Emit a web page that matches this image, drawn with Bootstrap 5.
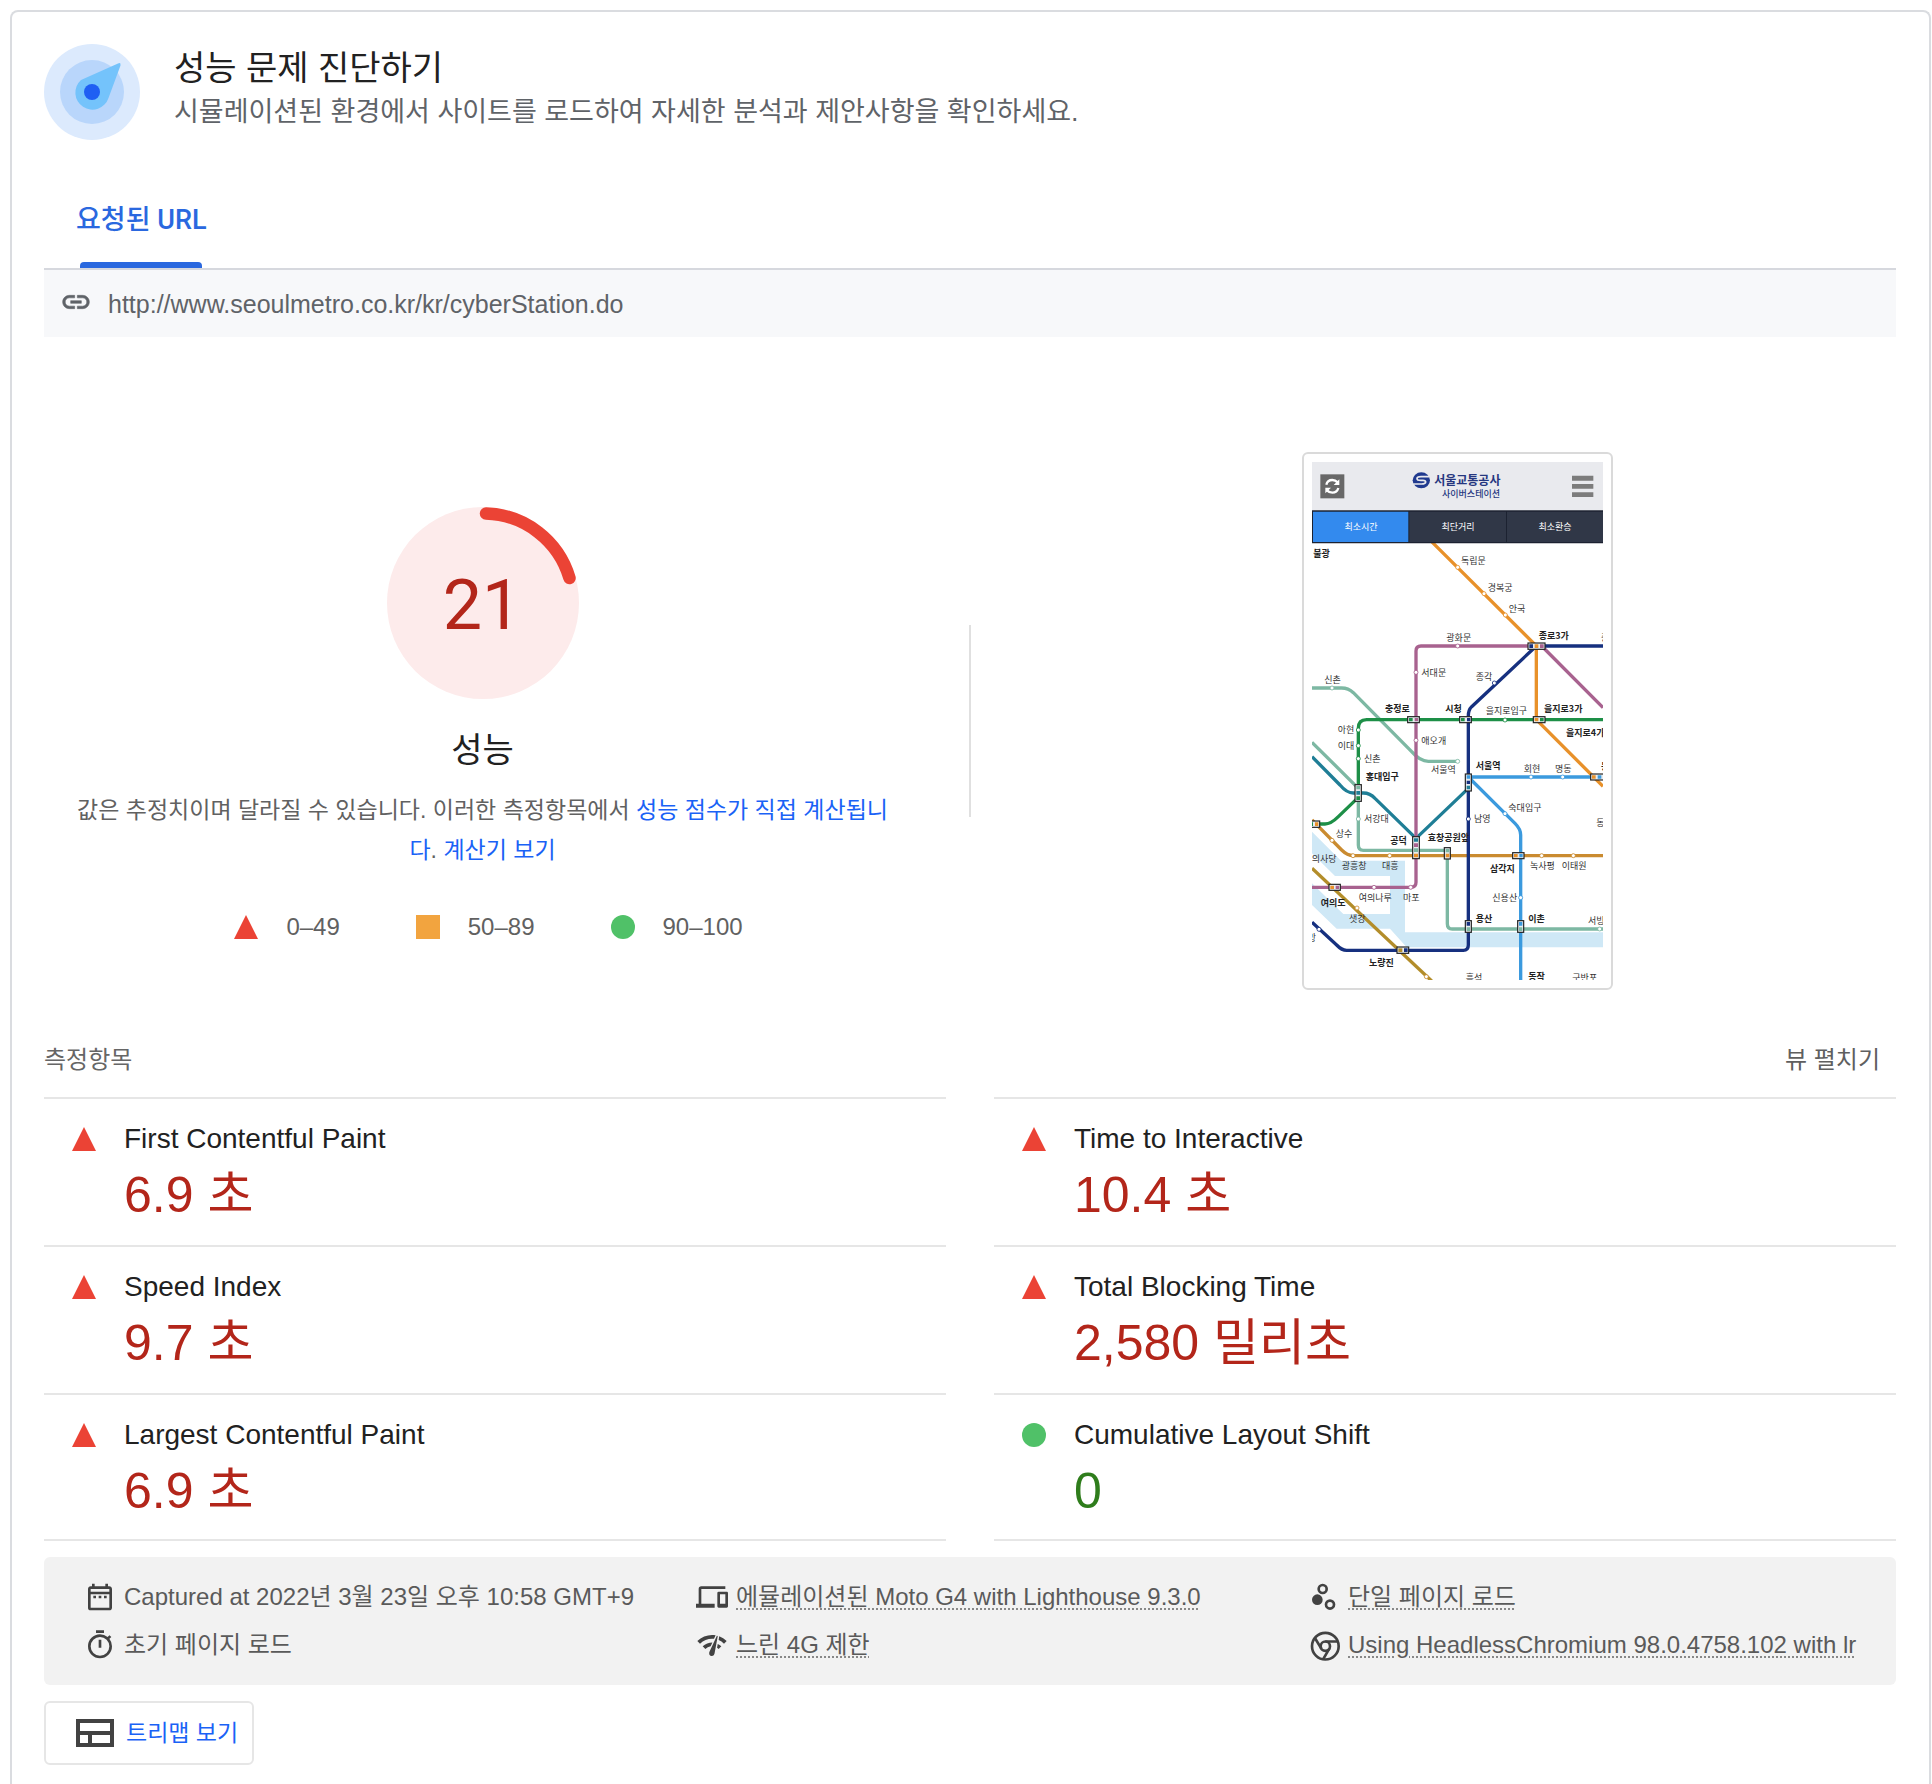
<!DOCTYPE html>
<html lang="ko">
<head>
<meta charset="utf-8">
<meta name="viewport" content="width=device-width, initial-scale=1">
<title>성능 문제 진단하기</title>
<link href="https://cdn.jsdelivr.net/npm/bootstrap@5.3.0/dist/css/bootstrap.min.css" rel="stylesheet">
<style>
  body { font-family: "Liberation Sans", "Noto Sans CJK KR", sans-serif; font-size: 24px; line-height: 40px; color: #212121; background: #fff; }
  .report { margin: 10px 1px 0 10px; padding: 32px 33px 19px 32px; border: 2px solid #dadce0; border-bottom: 0; border-radius: 8px 8px 0 0; }
  .report-head { gap: 34px; }
  .report-title { font-size: 34px; line-height: 48px; font-weight: 400; margin: 0; }
  .report-sub { font-size: 27px; color: #5f6368; margin: 0; }
  .url-tabs { margin-top: 48px; border-bottom: 2px solid #d6d8de; }
  .url-tab { position: relative; height: 80px; padding: 0 32px 16px; border: 0; background: none; color: #2a68df; font-family: Roboto, "Noto Sans CJK KR", sans-serif; font-size: 27px; font-weight: 500; line-height: 60px; }
  .url-tab::after { content: ""; position: absolute; left: 36px; right: 36px; bottom: 0; height: 6px; background: #2a68df; border-radius: 4px 4px 0 0; }
  .url-bar { height: 67px; padding: 0 16px; gap: 16px; background: #f7f8fa; color: #5f6368; font-size: 25px; }
  .url-bar svg { margin-bottom: 4px; }
  .score-row { margin-top: 115px; }
  .score-main { padding-top: 55px; flex: 1 1 0; min-width: 0; }
  .score-shot { flex: 1 1 0; min-width: 0; }
  .score-rule { width: 2px; height: 192px; background: #e0e0e0; margin: 0 48px; }
  .score-name { font-size: 34px; line-height: 48px; margin: 27px 0 16px; font-weight: 400; }
  .score-note { font-size: 23px; color: #616161; max-width: 820px; margin: 0; }
  .blue-link { color: #1a62f6; text-decoration: none; }
  .score-key { margin-top: 37px; padding-left: 12px; gap: 76px; color: #616161; }
  .score-key span { gap: 28px; }
  .shot { padding: 8px; border: 2px solid #dadada; border-radius: 6px; }
  .metric-head { margin-top: 54px; line-height: 32px; padding-bottom: 21px; color: #666; }
  .expand-btn { border: 0; background: none; padding: 0 16px; color: #5f5f5f; line-height: 32px; }
  .metric-grid { display: grid; grid-template-columns: 1fr 1fr; column-gap: 48px; }
  .metric { border-top: 2px solid #e6e6e6; padding: 20px 28px; gap: 28px; }
  .metric svg { margin-top: 8px; }
  .metric:nth-last-child(-n+2) { border-bottom: 2px solid #e6e6e6; padding-bottom: 18px; }
  .metric-name { font-size: 28px; line-height: 40px; font-weight: 400; margin: 0 0 6px; }
  .metric-value { font-size: 50px; line-height: 60px; color: #b3261a; }
  .metric-value.good { color: #2f7d1c; }
  .env { display: grid; grid-template-columns: repeat(3, minmax(0, 1fr)); column-gap: 48px; margin: 16px 0; padding: 16px 32px; background: #f2f2f2; border-radius: 6px; color: #5a5a5a; list-style: none; }
  .env li { display: flex; align-items: center; gap: 8px; height: 48px; padding-left: 8px; white-space: nowrap; overflow: hidden; }
  .env svg { flex: none; fill: #424242; }
  .env a { color: inherit; text-decoration: underline dotted #888 2px; text-underline-offset: 3px; }
  .treemap-btn { height: 64px; padding: 0 14px 0 24px; gap: 8px; border: 2px solid #e6e6e6; border-radius: 6px; background: #fff; color: #1a62f6; font-size: 23px; }
  .gauge-num { font: 70px Roboto, sans-serif; fill: #b3261a; }
  .map-text { font: 27px "Noto Sans CJK KR", sans-serif; fill: #333; }
  .map-strong { font-weight: 700; fill: #222; }
  .map-line { fill: none; stroke-width: 10; }
</style>
<script src="https://cdn.jsdelivr.net/npm/bootstrap@5.3.0/dist/js/bootstrap.bundle.min.js"></script>
</head>
<body class="d-flex flex-column min-vh-100">
<svg width="0" height="0" class="position-absolute" aria-hidden="true">
  <symbol id="bad" viewBox="0 0 24 24"><path d="M12 0 24 24H0z" fill="#eb4335"/></symbol>
  <symbol id="good" viewBox="0 0 24 24"><circle cx="12" cy="12" r="12" fill="#50c168"/></symbol>
</svg>
<main class="report flex-fill">
  <header class="report-head d-flex">
    <svg width="96" height="96" viewBox="0 0 96 96" aria-hidden="true">
      <circle cx="48" cy="48" r="48" fill="#dceafd"/><circle cx="48" cy="48" r="32" fill="#b9d6fb"/>
      <path d="M74 19.500q3-1.500 2.500 2L64.500 54A17 17 0 1 1 37 36Z" fill="#74c3fb"/>
      <circle cx="48" cy="48" r="8" fill="#1f5ff3"/>
    </svg>
    <div>
      <h1 class="report-title">성능 문제 진단하기</h1>
      <p class="report-sub">시뮬레이션된 환경에서 사이트를 로드하여 자세한 분석과 제안사항을 확인하세요.</p>
    </div>
  </header>

  <div class="url-tabs d-flex" role="tablist"><button class="url-tab" type="button" role="tab" aria-selected="true">요청된 URL</button></div>
  <div class="url-bar d-flex align-items-center">
    <svg width="32" height="32" viewBox="0 0 24 24" fill="#5f6368" stroke="#5f6368" stroke-width=".4" aria-hidden="true"><path d="M3.900 12c0-1.710 1.390-3.100 3.100-3.100h4V7H7c-2.760 0-5 2.240-5 5s2.240 5 5 5h4v-1.900H7c-1.710 0-3.100-1.390-3.100-3.100zM8 13h8v-2H8v2zm9-6h-4v1.900h4c1.710 0 3.100 1.390 3.100 3.100s-1.390 3.100-3.100 3.100h-4V17h4c2.760 0 5-2.240 5-5s-2.240-5-5-5z"/></svg>
    <span>http://www.seoulmetro.co.kr/kr/cyberStation.do</span>
  </div>

  <section class="score-row d-flex align-items-start">
    <div class="score-main d-flex flex-column align-items-center text-center">
      <svg width="192" height="192" viewBox="0 0 192 192" role="img" aria-label="성능 점수 21">
        <circle cx="96" cy="96" r="96" fill="#fdebeb"/>
        <path d="M99 6.500A90 90 0 0 1 182.500 71" fill="none" stroke="#eb4335" stroke-width="12.500" stroke-linecap="round"/>
        <text class="gauge-num" x="95" y="122" text-anchor="middle">21</text>
      </svg>
      <h2 class="score-name">성능</h2>
      <p class="score-note">값은 추정치이며 달라질 수 있습니다. 이러한 측정항목에서 <a class="blue-link" href="#score">성능 점수가 직접 계산됩니다</a>. <a class="blue-link" href="#calc">계산기 보기</a></p>
      <div class="score-key d-flex">
        <span class="d-flex align-items-center"><svg width="24" height="24"><use href="#bad"/></svg>0–49</span>
        <span class="d-flex align-items-center"><svg width="24" height="24"><path d="M0 0h24v24H0z" fill="#f2a43f"/></svg>50–89</span>
        <span class="d-flex align-items-center"><svg width="24" height="24"><use href="#good"/></svg>90–100</span>
      </div>
    </div>
    <div class="score-rule align-self-center"></div>
    <div class="score-shot d-flex justify-content-center">
      <div class="shot d-flex">
        <svg width="291" height="518" viewBox="51 51 873 1554" role="img" aria-label="서울교통공사 사이버스테이션 노선도">
          <path d="M51 1160L138 1247H330V1462H924V1507H335L285 1451H125L51 1380V1315L145 1407H285V1293H120L51 1225Z" fill="#cfe8f6"/>
          <g class="map-line" stroke-linejoin="round">
            <path stroke="#7db8a3" d="M51 729H140Q160 729 175 743L350 920Q375 949 400 949H488M51 892L190 1030V1200Q190 1216 205 1216H457V1436Q457 1452 472 1452H924"/>
            <path stroke="#1f7e96" d="M51 935L135 1020Q155 1044 175 1044H205Q225 1044 240 1060L363 1180L520 1030"/>
            <path stroke="#1d8f47" d="M924 824H215Q190 824 190 850V1057L130 1115Q108 1137 90 1137H51"/>
            <path stroke="#a8628f" d="M724 603H378Q363 603 363 618V1312Q363 1327 348 1327H51M740 603L924 788"/>
            <path stroke="#ca8b30" d="M51 1125L140 1215Q157 1232 175 1232H924"/>
            <path stroke="#3b9ade" d="M924 996H520L660 1135Q677 1152 677 1170V1605"/>
            <path stroke="#b38d2a" d="M51 1270L410 1608"/>
            <path stroke="#16307f" d="M924 603H724L530 785Q520 795 520 812V1500Q520 1516 505 1516H155Q140 1516 125 1500L51 1432"/>
            <path stroke="#e8912a" d="M400 280L724 603V824L924 1024"/>
          </g>
          <g fill="#fff" stroke-width="2.500">
            <g stroke="#e8912a"><circle cx="488" cy="367" r="6"/><circle cx="567" cy="446" r="6"/><circle cx="631" cy="510" r="6"/></g>
            <g stroke="#a8628f"><circle cx="488" cy="603" r="6"/><circle cx="363" cy="682" r="6"/><circle cx="363" cy="886" r="6"/><circle cx="237" cy="1327" r="6"/><circle cx="347" cy="1327" r="6"/></g>
            <g stroke="#7db8a3"><circle cx="111" cy="729" r="6"/><circle cx="488" cy="949" r="6"/><circle cx="190" cy="1122" r="6"/><circle cx="914" cy="1452" r="6"/></g>
            <g stroke="#1d8f47"><circle cx="630" cy="825" r="6"/><circle cx="190" cy="855" r="6"/><circle cx="190" cy="902" r="6"/><circle cx="190" cy="941" r="6"/></g>
            <g stroke="#3b9ade"><circle cx="708" cy="996" r="6"/><circle cx="803" cy="996" r="6"/><circle cx="630" cy="1106" r="6"/><circle cx="677" cy="1358" r="6"/></g>
            <g stroke="#ca8b30"><circle cx="111" cy="1186" r="6"/><circle cx="174" cy="1232" r="6"/><circle cx="284" cy="1232" r="6"/><circle cx="740" cy="1232" r="6"/><circle cx="835" cy="1232" r="6"/><circle cx="186" cy="1389" r="6"/><circle cx="394" cy="1595" r="6"/></g>
            <g stroke="#16307f"><circle cx="598" cy="714" r="6"/><circle cx="520" cy="1122" r="6"/><circle cx="72" cy="1453" r="6"/></g>
          </g>
          <g fill="#e9edf0" stroke="#222" stroke-width="3.500">
            <rect x="699" y="594" width="51" height="19"/><rect x="338" y="815" width="35" height="18"/><rect x="494" y="815" width="35" height="18"/><rect x="715" y="815" width="35" height="18"/>
            <rect x="180" y="1019" width="19" height="50"/><rect x="511" y="987" width="18" height="51"/><rect x="353" y="1175" width="20" height="66"/><rect x="448" y="1208" width="18" height="34"/>
            <rect x="40" y="1128" width="34" height="19"/><rect x="887" y="987" width="50" height="18"/><rect x="653" y="1223" width="34" height="18"/><rect x="102" y="1318" width="34" height="18"/>
            <rect x="511" y="1427" width="18" height="35"/><rect x="668" y="1427" width="18" height="35"/><rect x="306" y="1506" width="35" height="19"/>
          </g>
          <g>
            <path fill="#16307f" d="M703 598h11v11h-11zM516 819h10v10h-10zM515 1007h10v10h-10zM515 1431h10v11h-10zM327 1510h11v11h-11z"/>
            <path fill="#e8912a" d="M719 598h11v11h-11zM719 819h11v10h-11zM357 1226h12v11h-12zM452 1226h11v11h-11zM60 1132h10v11h-10zM891 991h11v10h-11zM657 1227h11v10h-11zM106 1322h11v10h-11z"/>
            <path fill="#a8628f" d="M735 598h11v11h-11zM359 819h10v10h-10zM357 1195h12v11h-12zM122 1322h10v10h-10z"/>
            <path fill="#1d8f47" d="M342 819h11v10h-11zM498 819h11v10h-11zM735 819h11v10h-11zM184 1054h11v11h-11zM44 1132h10v11h-10z"/>
            <path fill="#3b9ade" d="M515 991h10v10h-10zM908 991h11v10h-11zM673 1227h10v10h-10zM672 1431h10v11h-10z"/>
            <path fill="#1f7e96" d="M184 1038h11v11h-11zM515 1022h10v11h-10zM357 1180h12v10h-12z"/>
            <path fill="#7db8a3" d="M184 1023h11v10h-11zM357 1210h12v11h-12zM452 1212h11v10h-11zM515 1447h10v11h-10zM672 1447h10v11h-10z"/>
            <path fill="#b38d2a" d="M310 1510h12v11h-12z"/>
          </g>
          <g class="map-text">
            <text x="498" y="358">독립문</text><text x="578" y="438">경복궁</text><text x="641" y="502">안국</text><text x="454" y="588">광화문</text>
            <text x="379" y="693">서대문</text><text x="88" y="715">신촌</text><text x="542" y="704">종각</text><text x="572" y="808">을지로입구</text>
            <text x="128" y="864">아현</text><text x="128" y="912">이대</text><text x="207" y="952">신촌</text><text x="379" y="896">애오개</text><text x="408" y="983">서울역</text>
            <text x="686" y="981">회현</text><text x="780" y="981">명동</text><text x="640" y="1098">숙대입구</text><text x="207" y="1132">서강대</text><text x="537" y="1132">남영</text><text x="904" y="1142">동</text>
            <text x="122" y="1176">상수</text><text x="50" y="1252">의사당</text><text x="140" y="1272">광흥창</text><text x="261" y="1272">대흥</text><text x="705" y="1272">녹사평</text><text x="800" y="1272">이태원</text>
            <text x="191" y="1367">여의나루</text><text x="324" y="1367">마포</text><text x="592" y="1367">신용산</text><text x="162" y="1430">샛강</text><text x="879" y="1438">서빙고</text><text x="38" y="1488">방</text>
            <text x="512" y="1607">흑석</text><text x="832" y="1607">구반포</text><text x="918" y="588">종</text>
          </g>
          <g class="map-text map-strong">
            <text x="55" y="336">불광</text><text x="731" y="581">종로3가</text><text x="270" y="802">충정로</text><text x="451" y="802">시청</text><text x="747" y="802">을지로3가</text><text x="813" y="872">을지로4가</text>
            <text x="542" y="973">서울역</text><text x="212" y="1005">홍대입구</text><text x="286" y="1196">공덕</text><text x="398" y="1188">효창공원앞</text><text x="585" y="1280">삼각지</text><text x="77" y="1382">여의도</text>
            <text x="542" y="1431">용산</text><text x="700" y="1431">이촌</text><text x="222" y="1564">노량진</text><text x="700" y="1605">동작</text><text x="918" y="975">동</text>
          </g>
          <path d="M51 51h873v145H51z" fill="#e9eaee"/>
          <path d="M51 196h873v99H51z" fill="#1c2231"/><path d="M54 200h286v91H54z" fill="#338aee"/><path d="M343 200h290v91H343zM636 200h288v91H636z" fill="#303747"/>
          <path d="M76 88h72v72H76z" fill="#686868"/>
          <g fill="none" stroke="#fff" stroke-width="7"><path d="M94 119Q97 105 112 105 121 105 128 112M130 129Q126 143 112 143 103 143 96 136"/></g>
          <path d="M133 103V120H116ZM91 145V128H108Z" fill="#fff"/>
          <path d="M831 92h64v15h-64zM831 117h64v14h-64zM831 142h64v14h-64z" fill="#7c7c7c"/>
          <ellipse cx="379" cy="106" rx="26" ry="24" fill="#203a8f"/>
          <path d="M403 95H378Q366 95 366 101 366 106 378 106H384Q392 106 392 111 392 117 380 117H355" fill="none" stroke="#e9eaee" stroke-width="5"/>
          <g class="map-text" text-anchor="middle">
            <text x="517" y="121" style="font-size:36px;font-weight:700;fill:#26377f">서울교통공사</text>
            <text x="528" y="157" style="font-weight:500;fill:#26377f">사이버스테이션</text>
            <g style="fill:#fff"><text x="198" y="254">최소시간</text><text x="489" y="254">최단거리</text><text x="780" y="254">최소환승</text></g>
          </g>
        </svg>
      </div>
    </div>
  </section>

  <div class="metric-head d-flex justify-content-between"><span>측정항목</span><button class="expand-btn" type="button">뷰 펼치기</button></div>
  <section class="metric-grid">
    <div class="metric d-flex"><svg width="24" height="24"><use href="#bad"/></svg><div><h3 class="metric-name">First Contentful Paint</h3><div class="metric-value">6.9 초</div></div></div>
    <div class="metric d-flex"><svg width="24" height="24"><use href="#bad"/></svg><div><h3 class="metric-name">Time to Interactive</h3><div class="metric-value">10.4 초</div></div></div>
    <div class="metric d-flex"><svg width="24" height="24"><use href="#bad"/></svg><div><h3 class="metric-name">Speed Index</h3><div class="metric-value">9.7 초</div></div></div>
    <div class="metric d-flex"><svg width="24" height="24"><use href="#bad"/></svg><div><h3 class="metric-name">Total Blocking Time</h3><div class="metric-value">2,580 밀리초</div></div></div>
    <div class="metric d-flex"><svg width="24" height="24"><use href="#bad"/></svg><div><h3 class="metric-name">Largest Contentful Paint</h3><div class="metric-value">6.9 초</div></div></div>
    <div class="metric d-flex"><svg width="24" height="24"><use href="#good"/></svg><div><h3 class="metric-name">Cumulative Layout Shift</h3><div class="metric-value good">0</div></div></div>
  </section>

  <ul class="env">
    <li><svg width="32" height="32" viewBox="0 0 24 24"><path d="M7 11h2v2H7v-2zm14-5v14c0 1.100-.9 2-2 2H5a2 2 0 0 1-2-2V6c0-1.100.9-2 2-2h1V2h2v2h8V2h2v2h1c1.100 0 2 .9 2 2zM5 8h14V6H5v2zm14 12V10H5v10h14zm-4-7h2v-2h-2v2zm-4 0h2v-2h-2v2z"/></svg><span>Captured at 2022년 3월 23일 오후 10:58 GMT+9</span></li>
    <li><svg width="32" height="32" viewBox="0 0 24 24"><path d="M4 6h18V4H4a2 2 0 0 0-2 2v11H0v3h14v-3H4V6zm19 2h-6a1 1 0 0 0-1 1v10c0 .6.5 1 1 1h6c.6 0 1-.5 1-1V9c0-.6-.5-1-1-1zm-1 9h-4v-7h4v7z"/></svg><a href="#device">에뮬레이션된 Moto G4 with Lighthouse 9.3.0</a></li>
    <li><svg width="32" height="32" viewBox="0 0 24 24"><circle cx="7" cy="14" r="4"/><g fill="none" stroke="#424242" stroke-width="2"><circle cx="11" cy="6" r="3"/><circle cx="16.500" cy="17.700" r="3"/></g></svg><a href="#session">단일 페이지 로드</a></li>
    <li><svg width="32" height="32" viewBox="0 0 24 24"><path d="M15 1H9v2h6V1zm-4 13h2V8h-2v6zm8.100-6.600L20.500 6l-1.400-1.400L17.700 6A9 9 0 0 0 12 4a9 9 0 1 0 9 9 9 9 0 0 0-2-5.600zM12 20a7 7 0 1 1 0-14 7 7 0 0 1 0 14z"/></svg><span>초기 페이지 로드</span></li>
    <li><svg width="32" height="32" viewBox="0 0 24 24"><path d="M15.900 5c-.2 0-.3 0-.4.2v.2L10.100 17a2 2 0 0 0-.2 1 2 2 0 0 0 4 .4l2.400-12.900c0-.3-.2-.5-.5-.5zM1 9l2 2c2.900-2.900 6.800-4 10.500-3.600l1.200-2.700C10 3.800 4.700 5.300 1 9zm20 2l2-2a15.400 15.400 0 0 0-5.600-3.500l-.4 2.800c1.500.6 2.800 1.500 4 2.700zm-4 4l2-2a9.900 9.900 0 0 0-2.700-1.800l-.5 2.800 1.200 1zM5 13l2 2a7.100 7.100 0 0 1 4-2l1.300-2.900C9.700 10.100 7 11 5 13z"/></svg><a href="#throttle">느린 4G 제한</a></li>
    <li><svg width="32" height="32" viewBox="0 0 24 24"><g fill="none" stroke="#424242" stroke-width="2"><circle cx="13" cy="12.900" r="10"/><circle cx="13" cy="12.900" r="3.500"/><path d="M13 9.400h9M10 14.700L5.300 6.900M16 14.700L11.500 22.400"/></g></svg><a href="#browser">Using HeadlessChromium 98.0.4758.102 with lr</a></li>
  </ul>

  <button class="treemap-btn d-inline-flex align-items-center" type="button"><svg width="48" height="48" viewBox="0 0 24 24" fill="#424242" aria-hidden="true"><path d="M3 5v14h19V5H3zm2 2h15v4H5V7zm0 10v-4h4v4H5zm6 0v-4h9v4h-9z"/></svg>트리맵 보기</button>
</main>
</body>
</html>
